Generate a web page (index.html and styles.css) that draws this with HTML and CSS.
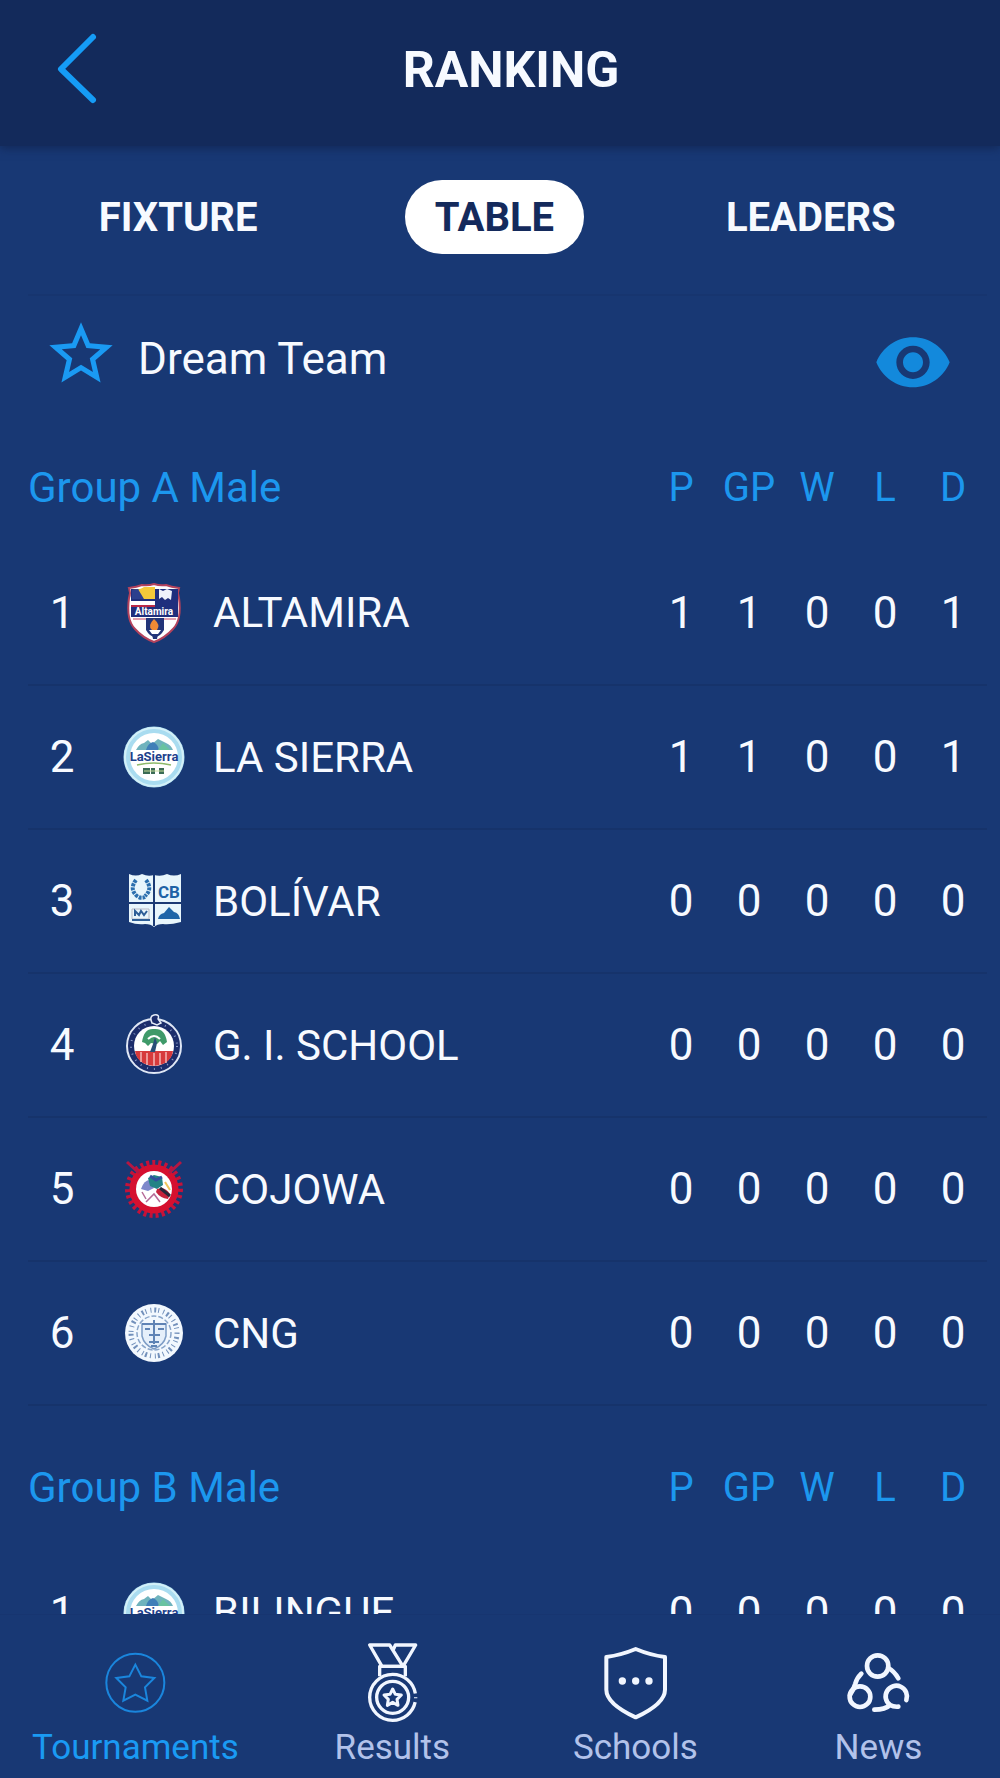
FILE: index.html
```html
<!DOCTYPE html>
<html lang="en">
<head>
  <meta charset="UTF-8" />
  <meta name="viewport" content="width=device-width, initial-scale=1.0" />
  <title>Ranking</title>
  <link rel="stylesheet" href="styles.css">
</head>
<body>
  <!-- Shared crest, used by more than one school -->
  <svg class="sprite" aria-hidden="true">
    <symbol id="crest-sierra" viewBox="0 0 64 64">
      <circle cx="32" cy="32" r="30.5" fill="#a9dcf0"/>
      <circle cx="32" cy="32" r="29" fill="none" stroke="#d3f0f8" stroke-width="2"/>
      <circle cx="32" cy="32" r="24" fill="#fff"/>
      <path d="M14 25q3-6 8-7l4-3 4 4 6-5 8 4q5 2 7 7z" fill="#6fb3bd"/>
      <path d="M24 25q2-7 7-8 5 2 6 8z" fill="#3f7fb8"/>
      <path d="M36 25l5-7 7 7z" fill="#69c3a0"/>
      <text x="32" y="36" text-anchor="middle" font-size="13" font-weight="700" fill="#1d3f8c">LaSierra</text>
      <path d="M15 40q17-4 34 0" fill="none" stroke="#8db96a" stroke-width="1.5"/>
      <path d="M21 43h7v6h-7zM29 43h4v6h-4zM37 43h5v6h-5z" fill="#3b6b55"/>
      <path d="M22 46h20" stroke="#c8dc9a" stroke-width="1"/>
    </symbol>
  </svg>

  <header class="header">
    <button class="back" aria-label="Back">
      <svg width="46" height="76" viewBox="0 0 46 76" fill="none" stroke="#159cf6" stroke-width="6" stroke-linecap="round" stroke-linejoin="round">
        <path d="M39 5L7 37l32 31"/>
      </svg>
    </button>
    <h1 class="title">RANKING</h1>
  </header>

  <nav class="tabs">
    <button class="tab">FIXTURE</button>
    <button class="tab active">TABLE</button>
    <button class="tab">LEADERS</button>
  </nav>

  <main class="content">
    <div class="dream-team">
      <svg class="star" viewBox="0 1.600 24 24" fill="#1a9af3">
        <path d="M22 9.240l-7.190-.62L12 2 9.190 8.630 2 9.240l5.460 4.730L5.820 21 12 17.270 18.180 21l-1.630-7.030L22 9.240zM12 15.400l-3.760 2.270 1-4.280-3.320-2.880 4.380-.38L12 6.100l1.710 4.040 4.380.38-3.320 2.880 1 4.280L12 15.400z"/>
      </svg>
      <span class="dream-label">Dream Team</span>
      <button class="eye" aria-label="View dream team">
        <svg width="80" height="80" viewBox="0 -1 24 24" fill="#1389dc">
          <path d="M12 4.500C7 4.500 2.730 7.610 1 12c1.730 4.390 6 7.500 11 7.500s9.270-3.110 11-7.500c-1.730-4.390-6-7.500-11-7.500zM12 17c-2.760 0-5-2.240-5-5s2.240-5 5-5 5 2.240 5 5-2.240 5-5 5zm0-8c-1.660 0-3 1.340-3 3s1.340 3 3 3 3-1.340 3-3-1.340-3-3-3z"/>
        </svg>
      </button>
    </div>

    <table class="group">
      <colgroup>
        <col class="col-rank"><col class="col-crest"><col>
        <col class="col-stat"><col class="col-stat"><col class="col-stat"><col class="col-stat"><col class="col-stat">
      </colgroup>
      <thead>
        <tr>
          <th class="group-name" colspan="3">Group A Male</th>
          <th>P</th><th>GP</th><th>W</th><th>L</th><th>D</th>
        </tr>
      </thead>
      <tbody>
        <tr>
          <td>1</td>
          <td>
            <svg class="crest" viewBox="0 0 64 64">
              <path d="M7 7q8-1 13-3 6 1 12-1 6 2 12 1 5 2 13 3-2 5 0 10 3 22-6 31-8 9-19 13-11-4-19-13-9-9-6-31 2-5 0-10z" fill="#fff" stroke="#b3425c" stroke-width="2"/>
              <path d="M9 8h47v28H9z" fill="#1f2f7d"/>
              <path d="M10 9q8 0 12-3h11v12H10z" fill="#f3c93a"/>
              <path d="M10 9l6-1 6 10H10z" fill="#2c3f8d"/>
              <path d="M9 20h24v4H9z" fill="#fff"/>
              <path d="M9 24h24v2H9z" fill="#b92947"/>
              <path d="M37 8l4 2 4-2 5 2-1 9-3-2-3 2-3-3-3 2z" fill="#eef2fb"/>
              <text x="32" y="34" text-anchor="middle" font-size="10" font-weight="700" fill="#fff">Altamira</text>
              <path d="M11 38h43" stroke="#c2415e" stroke-width="1"/>
              <path d="M24 37h18v12q-4 7-9 7t-9-7z" fill="#233579"/>
              <path d="M32 38q7 6 3 11h-5q-5-4 2-11z" fill="#f08a35"/>
              <path d="M27 49h12l-3 4h-6z" fill="#fff"/>
              <path d="M30 53h6l-1 5h-4z" fill="#233579"/>
            </svg>
          </td>
          <td class="team">ALTAMIRA</td>
          <td>1</td><td>1</td><td>0</td><td>0</td><td>1</td>
        </tr>
        <tr>
          <td>2</td>
          <td><svg class="crest"><use href="#crest-sierra"/></svg></td>
          <td class="team">LA SIERRA</td>
          <td>1</td><td>1</td><td>0</td><td>0</td><td>1</td>
        </tr>
        <tr>
          <td>3</td>
          <td>
            <svg class="crest" viewBox="0 0 64 64">
              <path d="M7 5q7 3 13 0 6 3 12 1 7 2 13-1 7 3 14 0v48q-11 3-18 2-6 0-9 3-3-3-9-3-8 1-16-2z" fill="#e8f6fc"/>
              <path d="M32 6v51M5 34h56" stroke="#1b3a74" stroke-width="2"/>
              <g fill="none" stroke="#2b6fae" stroke-width="4" stroke-dasharray="3 1">
                <path d="M14 11q-7 9 1 16 4 3 8 1"/>
                <path d="M24 11q7 9-1 16"/>
              </g>
              <text x="47" y="29" text-anchor="middle" font-size="17" font-weight="700" fill="#1f63a6">CB</text>
              <path d="M10 40h17v10H10z" fill="none" stroke="#b8b9c3" stroke-width="1"/>
              <path d="M13 47v-5l4 4 2-4 3 4 3-4M10 51h18" fill="none" stroke="#2d5e97" stroke-width="2"/>
              <path d="M36 50q1-5 6-6l5-6 5 5q5 1 6 7z" fill="#1e65a8"/>
            </svg>
          </td>
          <td class="team">BOLÍVAR</td>
          <td>0</td><td>0</td><td>0</td><td>0</td><td>0</td>
        </tr>
        <tr>
          <td>4</td>
          <td>
            <svg class="crest" viewBox="0 0 64 64">
              <circle cx="32" cy="33" r="27" fill="#1c2d6b" stroke="#dfe7f5" stroke-width="2"/>
              <circle cx="32" cy="33" r="23" fill="none" stroke="#8797c4" stroke-width="2" stroke-dasharray="1 6"/>
              <circle cx="32" cy="33" r="20" fill="#fff"/>
              <path d="M13 38h38q-1 8-8 12-11 6-22 0-7-4-8-12z" fill="#d73a3c"/>
              <path d="M19 39v10M25 40v12M32 40v13M38 40v12M44 39v11" stroke="#f3b7b5" stroke-width="1.500"/>
              <path d="M20 29q2-14 12-13 11-1 13 13l-4 3-3-4-3 3-6-1-3 3-3-3z" fill="#3f9a69"/>
              <path d="M26 26q6-6 12 0" fill="none" stroke="#fff" stroke-width="2"/>
              <path d="M33 24l2 6-2 9h-5l3-8z" fill="#284e78"/>
              <path d="M30 10q-3-7 2-8 6-1 4 4l3 4-4 2z" fill="#1c2d6b" stroke="#e7edf8" stroke-width="1.500"/>
            </svg>
          </td>
          <td class="team">G. I. SCHOOL</td>
          <td>0</td><td>0</td><td>0</td><td>0</td><td>0</td>
        </tr>
        <tr>
          <td>5</td>
          <td>
            <svg class="crest" viewBox="0 0 64 64">
              <circle cx="32" cy="32" r="26" fill="none" stroke="#c4123a" stroke-width="6" stroke-dasharray="3 3"/>
              <circle cx="32" cy="32" r="21" fill="none" stroke="#d5102f" stroke-width="7"/>
              <path d="M5 5l12 11M59 5L47 16" stroke="#b41743" stroke-width="3"/>
              <circle cx="32" cy="32" r="18" fill="#fff"/>
              <path d="M19 32q3-9 9-9l4 8-6 3z" fill="#7e88cb"/>
              <path d="M26 21l6-3 8 2 1 8-6 4-7-3z" fill="#238385"/>
              <path d="M28 19l6 4 6-3" fill="none" stroke="#31509e" stroke-width="3"/>
              <path d="M35 32q8-3 13 5l-2 5q-8-1-12-7z" fill="#c6243c"/>
              <path d="M38 31l10 8" stroke="#252a3a" stroke-width="3"/>
              <path d="M43 25l5 8" stroke="#f1c55b" stroke-width="2"/>
              <path d="M20 35l4 7M24 45l8-8 6 8" fill="none" stroke="#b56a97" stroke-width="1.500"/>
            </svg>
          </td>
          <td class="team">COJOWA</td>
          <td>0</td><td>0</td><td>0</td><td>0</td><td>0</td>
        </tr>
        <tr>
          <td>6</td>
          <td>
            <svg class="crest" viewBox="0 0 64 64">
              <circle cx="32" cy="32" r="29" fill="#f2f8fe"/>
              <circle cx="32" cy="32" r="23" fill="none" stroke="#7290bb" stroke-width="5" stroke-dasharray="1 3 2 2 1 4"/>
              <circle cx="32" cy="32" r="17" fill="none" stroke="#89a5ca" stroke-width="1.500" stroke-dasharray="5 2"/>
              <path d="M20 23h24v12q-2 9-12 13-10-4-12-13z" fill="#e5effa" stroke="#7e9dc6" stroke-width="1.500"/>
              <path d="M20 23h24M32 19v24M23 28h5M36 28h6M27 34h11" stroke="#5f83b5" stroke-width="2"/>
              <path d="M27 41h10M29 45h6" stroke="#5d83b5" stroke-width="2"/>
            </svg>
          </td>
          <td class="team">CNG</td>
          <td>0</td><td>0</td><td>0</td><td>0</td><td>0</td>
        </tr>
      </tbody>
    </table>

    <table class="group">
      <colgroup>
        <col class="col-rank"><col class="col-crest"><col>
        <col class="col-stat"><col class="col-stat"><col class="col-stat"><col class="col-stat"><col class="col-stat">
      </colgroup>
      <thead>
        <tr>
          <th class="group-name" colspan="3">Group B Male</th>
          <th>P</th><th>GP</th><th>W</th><th>L</th><th>D</th>
        </tr>
      </thead>
      <tbody>
        <tr>
          <td>1</td>
          <td><svg class="crest"><use href="#crest-sierra"/></svg></td>
          <td class="team">BILINGUE</td>
          <td>0</td><td>0</td><td>0</td><td>0</td><td>0</td>
        </tr>
      </tbody>
    </table>
  </main>

  <!-- Bottom navigation -->
  <nav class="bottom-nav">
    <a class="nav-item current" href="#">
      <svg class="nav-icon" viewBox="0 0 240 240" fill="none" stroke="#1a86dd" stroke-width="6">
        <circle cx="121" cy="119" r="87"/>
        <path d="M121 65l18 35 39 5-28 28 7 40-36-18-36 18 7-40-28-28 39-5z"/>
      </svg>
      <span>Tournaments</span>
    </a>
    <a class="nav-item" href="#">
      <svg class="nav-icon" viewBox="0 0 240 240" fill="none" stroke="#f1f6ff" stroke-width="10" stroke-linejoin="round">
        <path d="M53 6h60l40 64H90z"/>
        <path d="M124 20l6-14h61l-38 64"/>
        <path d="M83 100V70h77v30"/>
        <circle cx="122" cy="163" r="69" stroke-dasharray="3 12 404 12 3"/>
        <circle cx="122" cy="163" r="48"/>
        <path d="M122 138l8 16 18 2-13 13 3 18-16-9-16 9 3-18-13-13 18-2z" stroke-width="9"/>
      </svg>
      <span>Results</span>
    </a>
    <a class="nav-item" href="#">
      <svg class="nav-icon" viewBox="0 0 240 240" fill="none" stroke="#f1f6ff" stroke-width="12" stroke-linejoin="round">
        <path d="M122 18q43 18 88 24v98q0 42-88 83-88-41-88-83V42q45-6 88-24z"/>
        <g fill="#f1f6ff" stroke="none">
          <circle cx="82" cy="114" r="11"/>
          <circle cx="122" cy="114" r="11"/>
          <circle cx="162" cy="114" r="11"/>
        </g>
      </svg>
      <span>Schools</span>
    </a>
    <a class="nav-item" href="#">
      <svg class="nav-icon" viewBox="0 0 240 240" fill="none" stroke="#f1f6ff" stroke-width="14" stroke-linecap="round">
        <circle cx="119" cy="69" r="32"/>
        <path d="M151 75q17 9 30 31"/>
        <circle cx="66" cy="161" r="31"/>
        <path d="M36 156q10-14 16-34 4-16 18-30"/>
        <path d="M205 171a32 32 0 1 0-49 15q-14 14-47 14M156 186q10 6 25 5"/>
      </svg>
      <span>News</span>
    </a>
  </nav>
</body>
</html>
```
FILE: styles.css
```css
* {
  box-sizing: border-box;
}
body {
  margin: 0;
  height: 100vh;
  display: flex;
  flex-direction: column;
  background-color: #183874;
  color: #f7faff;
  font-family: Roboto, Arial, sans-serif;
}
button {
  padding: 0;
  border: none;
  background: none;
  color: inherit;
  font-family: inherit;
  cursor: pointer;
}
svg {
  display: block;
}
.sprite {
  display: none;
}
.header {
  flex: none;
  height: 146px;
  display: flex;
  align-items: center;
  padding: 0 134px 6px 0;
  background-color: #132a5b;
  box-shadow: 0 3px 8px #132a5b;
}
.back {
  width: 156px;
  padding-left: 54px;
}
.title {
  flex: 1;
  margin: 0;
  text-align: center;
  font-size: 50px;
  font-weight: 700;
}
.tabs {
  flex: none;
  display: grid;
  grid-template-columns: repeat(3, 1fr);
  justify-items: center;
  padding: 34px 31px 40px 20px;
}
.tab {
  height: 74px;
  padding: 0 30px;
  border-radius: 37px;
  font-size: 40px;
  font-weight: 700;
}
.tab.active {
  background-color: #fff;
  color: #142a5c;
}
.content {
  flex: 1;
  min-height: 0;
  overflow-y: auto;
  scrollbar-width: none;
  padding: 0 13px 0 28px;
}
.dream-team {
  height: 128px;
  display: flex;
  align-items: center;
  margin-bottom: 11px;
  padding: 0 34px 0 15px;
  border-top: 2px solid #17356f;
}
.star {
  width: 76px;
  height: 76px;
}
.dream-label {
  flex: 1;
  padding-left: 19px;
  font-size: 44px;
}
.group {
  width: 100%;
  table-layout: fixed;
  border-collapse: collapse;
  margin-bottom: 27px;
}
.col-rank,
.col-stat {
  width: 68px;
}
.col-crest {
  width: 116px;
}
.group th {
  height: 108px;
  padding: 0;
  color: #1c97ee;
  font-size: 40px;
  font-weight: 400;
}
.group .group-name {
  text-align: left;
  font-size: 42px;
}
.group td {
  height: 144px;
  padding: 0;
  text-align: center;
  font-size: 44px;
  border-bottom: 2px solid #16336b;
}
.group .team {
  padding-left: 1px;
  text-align: left;
  font-size: 42px;
  white-space: nowrap;
}
.crest {
  width: 64px;
  height: 64px;
  margin: 0 auto;
}
.bottom-nav {
  flex: none;
  display: flex;
  border-top: 1px solid #173570;
}
.nav-item {
  flex: 1;
  display: flex;
  flex-direction: column;
  align-items: center;
  gap: 5px;
  padding: 28px 32px 10px;
  color: #b2c2ea;
  font-size: 35px;
  line-height: 40px;
  text-decoration: none;
}
.nav-item.current {
  color: #1a9af3;
}
.nav-icon {
  width: 80px;
  height: 80px;
}
```
